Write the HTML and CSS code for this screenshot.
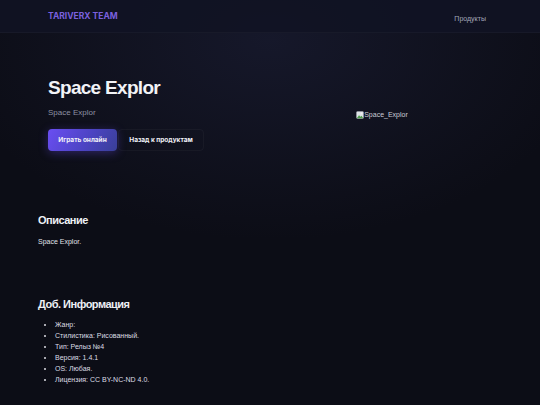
FILE: index.html
```html
<!DOCTYPE html>
<html lang="ru">
<head>
<meta charset="utf-8">
<title>Space Explor</title>
<link rel="stylesheet" href="styles.css">
</head>
<body>
<header class="site-header">
  <div class="logo">TARIVERX TEAM</div>
  <nav class="nav"><a href="#">Продукты</a></nav>
</header>
<main>
  <section class="hero">
    <div class="hero-text">
      <h1 class="title">Space Explor</h1>
      <p class="subtitle">Space Explor</p>
      <div class="actions">
        <a class="btn btn-primary" href="#">Играть онлайн</a>
        <a class="btn btn-ghost" href="#">Назад к продуктам</a>
      </div>
    </div>
    <div class="hero-media">
      <span class="broken"><svg class="broken-icon" width="8" height="8" viewBox="0 0 8 8"><rect x="0.5" y="0.5" width="7" height="7" rx="1" fill="#dfe3e8" stroke="#9aa0a8" stroke-width="0.6"/><path d="M0.8 7.2 L3 4.2 L4.6 5.8 L5.6 4.8 L7.2 7.2 Z" fill="#4c9a4a"/><circle cx="5.6" cy="2.4" r="0.9" fill="#f2f2f2"/></svg>Space_Explor</span>
    </div>
  </section>
  <section class="info">
    <h2 class="info-title">Описание</h2>
    <p class="info-text">Space Explor.</p>
  </section>
  <section class="info info-extra">
    <h2 class="info-title">Доб. Информация</h2>
    <ul class="info-list">
      <li>Жанр:</li>
      <li>Стилистика: Рисованный.</li>
      <li>Тип: Релыз №4</li>
      <li>Версия: 1.4.1</li>
      <li>OS: Любая.</li>
      <li>Лицензия: CC BY-NC-ND 4.0.</li>
    </ul>
  </section>
</main>
</body>
</html>
```
FILE: styles.css
```css
* { box-sizing: border-box; }
html, body { margin: 0; padding: 0; }
body {
  background: #0c0d16;
  color: #e6e7ee;
  font-family: "Liberation Sans", Arial, sans-serif;
  min-height: 405px;
  background-image: radial-gradient(ellipse 320px 200px at 270px 40px, rgba(40, 44, 80, 0.35), rgba(12, 13, 22, 0) 100%);
}
.site-header {
  height: 33px;
  padding: 0 54px 0 48px;
  display: flex;
  align-items: center;
  justify-content: space-between;
  background: rgba(17, 19, 36, 0.9);
  border-bottom: 1px solid rgba(255, 255, 255, 0.03);
}
.logo {
  font-family: Inter, "Liberation Sans", sans-serif;
  font-weight: 700;
  font-size: 8.5px;
  color: #7a60dd;
}
.nav a {
  color: #a3a6b8;
  text-decoration: none;
  font-size: 7px;
}
.hero {
  display: grid;
  grid-template-columns: 1fr 1fr;
  column-gap: 20px;
  align-items: center;
  padding: 43px 48px 0 48px;
}
.title {
  margin: 0;
  font-family: "Liberation Sans", Arial, sans-serif;
  font-weight: 700;
  font-size: 19px;
  letter-spacing: -0.7px;
  line-height: 24px;
  color: #f2f3f7;
}
.subtitle {
  margin: 8px 0 0;
  font-size: 8px;
  line-height: 10px;
  color: #8d90a2;
}
.actions {
  display: flex;
  gap: 1px;
  margin-top: 11px;
}
.btn {
  display: inline-flex;
  align-items: center;
  justify-content: center;
  height: 22px;
  padding: 0 10px;
  border-radius: 4px;
  font-family: Inter, "Liberation Sans", sans-serif;
  font-weight: 700;
  font-size: 6.5px;
  text-decoration: none;
  color: #f1f1f8;
}
.btn-primary {
  width: 69px;
  background: linear-gradient(120deg, #6a4ef2 0%, #4d44c4 55%, #393f97 100%);
  box-shadow: 0 2px 10px rgba(106, 78, 242, 0.35);
}
.btn-ghost {
  width: 86px;
  border: 1px solid rgba(255, 255, 255, 0.035);
  background: transparent;
}
.hero-media {
  justify-self: center;
  margin-left: -8px;
}
.broken {
  display: inline-flex;
  align-items: center;
  font-size: 7px;
  color: #c9ccd6;
}
.info {
  padding: 0 38px;
  margin-top: 62px;
}
.info-title {
  margin: 0;
  font-family: "Liberation Sans", Arial, sans-serif;
  font-weight: 700;
  font-size: 11px;
  letter-spacing: -0.5px;
  line-height: 14px;
  color: #eef0f5;
}
.info-text {
  margin: 10px 0 0;
  font-size: 7px;
  line-height: 10px;
  color: #e0e2ea;
}
.info-extra { margin-top: 50px; }
.info-list {
  margin: 8px 0 0;
  padding-left: 17px;
  font-size: 7px;
  line-height: 11px;
  color: #dcdde5;
}
```
